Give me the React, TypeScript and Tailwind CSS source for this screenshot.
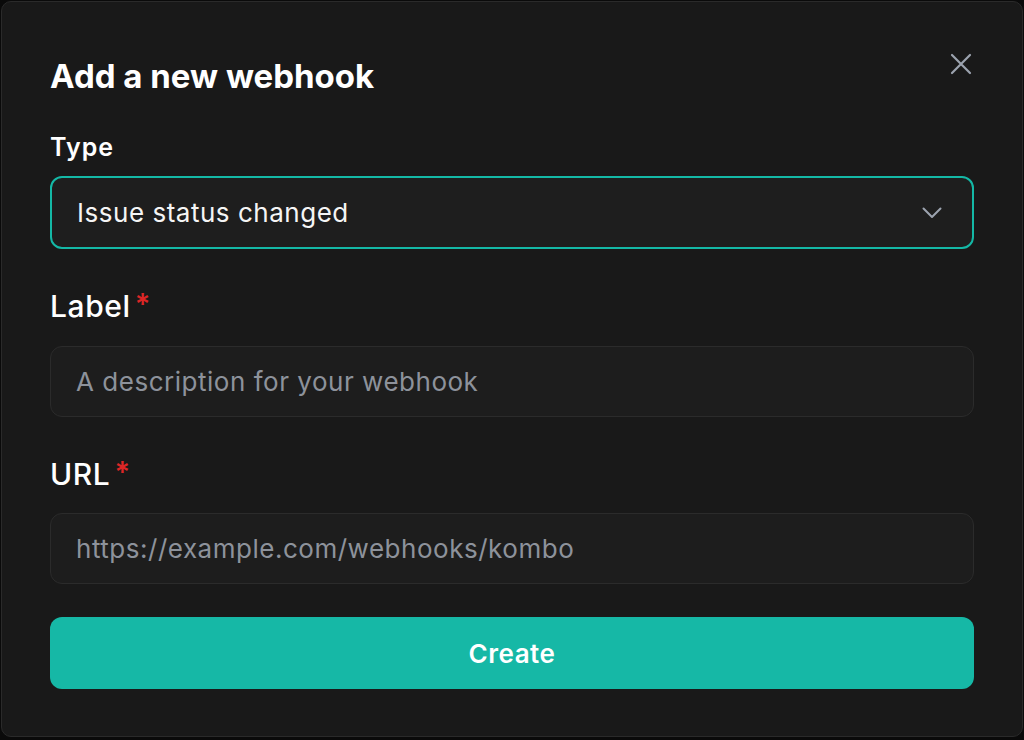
import { useState } from 'react';

function CloseIcon() {
  return (
    <svg width="22" height="22" viewBox="0 0 22 22" fill="none" stroke="currentColor" strokeWidth="2.2" strokeLinecap="round">
      <path d="M2 2L20 20M20 2L2 20" />
    </svg>
  );
}

function Chevron() {
  return (
    <svg width="20" height="12" viewBox="0 0 20 12" fill="none" stroke="currentColor" strokeWidth="2" strokeLinecap="round" strokeLinejoin="round">
      <path d="M1.5 1.5L10 10L18.5 1.5" />
    </svg>
  );
}

function FieldLabel({ children }: { children: string }) {
  return (
    <label className="flex items-start h-[36px] leading-[36px] text-[30px] font-medium tracking-[0.02em] text-white">
      {children}
      <span className="ml-[4px] text-[29px] leading-[32px] font-semibold text-[#dc2626]">*</span>
    </label>
  );
}

export default function App() {
  const [label, setLabel] = useState('');
  const [url, setUrl] = useState('');

  return (
    <div className="w-[1024px] h-[740px] bg-[#0a0a0a] p-px font-['Inter','Liberation_Sans',sans-serif] antialiased">
      <div className="relative w-[1022px] h-[736px] rounded-[10px] border border-[#2a2a2a] bg-[#191919] px-12 pt-[54px]">
        <button className="absolute right-[50px] top-[51px] text-[#9ca3af]" aria-label="Close">
          <CloseIcon />
        </button>

        <h2 className="h-[40px] leading-[40px] text-[33px] font-bold text-white">
          Add a new webhook
        </h2>

        <div className="mt-[35px] h-[32px] leading-[32px] text-[25px] font-semibold tracking-[0.04em] text-white">Type</div>
        <button className="mt-[13px] flex h-[73px] w-full items-center justify-between rounded-[12px] border-2 border-[#14b8a6] bg-[#1e1e1e] pl-[25px] pr-[30px] text-left">
          <span className="text-[26px] tracking-[0.02em] text-[#f5f5f5]">Issue status changed</span>
          <span className="text-[#9ca3af]">
            <Chevron />
          </span>
        </button>

        <div className="mt-[39px]">
          <FieldLabel>Label</FieldLabel>
        </div>
        <input
          value={label}
          onChange={(e) => setLabel(e.target.value)}
          placeholder="A description for your webhook"
          className="mt-[22px] block h-[71px] w-full rounded-[12px] border border-[#2b2b2b] bg-[#1d1d1d] px-[25px] text-[26px] tracking-[0.02em] text-white outline-none placeholder:text-[#8d929b]"
        />

        <div className="mt-[39px]">
          <FieldLabel>URL</FieldLabel>
        </div>
        <input
          value={url}
          onChange={(e) => setUrl(e.target.value)}
          placeholder="https://example.com/webhooks/kombo"
          className="mt-[21px] block h-[71px] w-full rounded-[12px] border border-[#2b2b2b] bg-[#1d1d1d] px-[25px] text-[26px] tracking-[0.02em] text-white outline-none placeholder:text-[#8d929b]"
        />

        <button className="mt-[33px] block h-[72px] w-full rounded-[12px] bg-[#16b8a6] text-[26px] font-semibold tracking-[0.02em] text-white">
          Create
        </button>
      </div>
    </div>
  );
}
